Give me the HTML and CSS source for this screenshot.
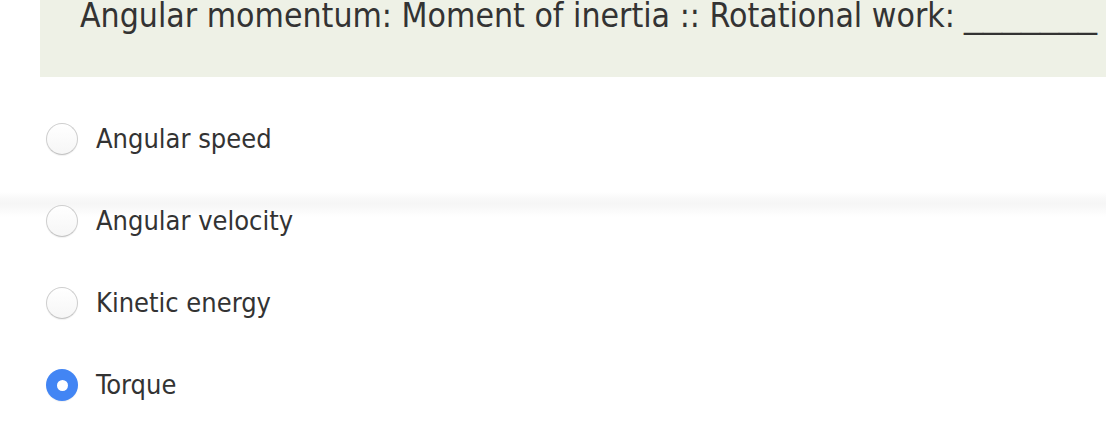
FILE: index.html
```html
<!DOCTYPE html>
<html>
<head>
<meta charset="utf-8">
<link rel="stylesheet" href="styles.css">
</head>
<body>
<div class="question">
  <p class="stem">Angular momentum: Moment of inertia :: Rotational work: <span class="blank">_______</span></p>
</div>
<ul class="options">
  <li class="option"><span class="radio"></span><span class="label">Angular speed</span></li>
  <li class="option smear"><span class="radio"></span><span class="label">Angular velocity</span></li>
  <li class="option"><span class="radio"></span><span class="label">Kinetic energy</span></li>
  <li class="option"><span class="radio checked"></span><span class="label">Torque</span></li>
</ul>
</body>
</html>
```
FILE: styles.css
```css
html, body {
  margin: 0;
  padding: 0;
  background: #ffffff;
}
body {
  font-family: "DejaVu Sans Condensed", "DejaVu Sans", Tahoma, sans-serif;
  color: #333333;
  width: 1106px;
  height: 434px;
  overflow: hidden;
}
.question {
  margin-left: 40px;
  height: 77px;
  background: #eef1e6;
  padding-left: 40px;
  box-sizing: border-box;
  overflow: hidden;
}
.stem {
  margin: 0;
  font-size: 33.5px;
  line-height: 32px;
  white-space: nowrap;
}
.blank {
  display: inline-block;
  transform: scaleX(1.26);
  transform-origin: left center;
}
.options {
  list-style: none;
  margin: 21px 0 0 0;
  padding: 0;
}
.option {
  height: 82px;
  display: flex;
  align-items: center;
  padding-left: 46px;
  gap: 18px;
}
.option.smear {
  background: linear-gradient(to bottom,
    #ffffff 0px,
    #ffffff 12px,
    #f9f9f9 18px,
    #f6f6f6 24px,
    #fafafa 30px,
    #ffffff 37px,
    #ffffff 100%);
}
.radio {
  width: 32px;
  height: 32px;
  box-sizing: border-box;
  border-radius: 50%;
  border: 1px solid #cfcfcf;
  border-bottom-color: #c4c4c4;
  background: linear-gradient(#ffffff, #f6f6f6);
  box-shadow: 0 1px 1px rgba(0,0,0,0.06);
  display: flex;
  align-items: center;
  justify-content: center;
  flex: none;
}
.radio.checked {
  border: none;
  background: #4285f4;
}
.radio.checked::after {
  content: "";
  width: 11px;
  height: 11px;
  border-radius: 50%;
  background: #ffffff;
}
.label {
  font-size: 27px;
  line-height: 30px;
}
```
